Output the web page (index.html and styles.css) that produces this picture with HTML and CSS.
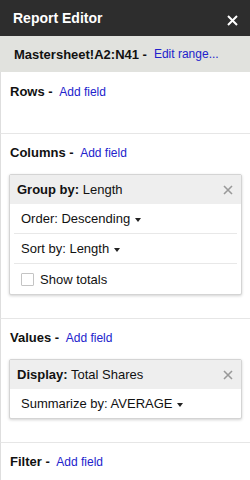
FILE: index.html
```html
<!DOCTYPE html>
<html lang="en">
<head>
    <meta charset="UTF-8">
    <title>Report Editor</title>
    <link rel="stylesheet" href="styles.css">
</head>
<body>
    <div class="panel">
        <div class="panel-header">
            <span class="panel-title">Report Editor</span>
            <svg class="panel-close" width="11" height="11" viewBox="0 0 11 11">
                <path d="M1 1L10 10M10 1L1 10" stroke="#fff" stroke-width="2"/>
            </svg>
        </div>
        <div class="range-bar">
            <span class="range-name">Mastersheet!A2:N41 -</span>
            <a class="link" href="#">Edit range...</a>
        </div>

        <div class="section section-first">
            <div class="section-head">Rows - <a class="link" href="#">Add field</a></div>
            <div class="fields-empty"></div>
        </div>

        <div class="section">
            <div class="section-head">Columns - <a class="link" href="#">Add field</a></div>
            <div class="card">
                <div class="card-head">
                    <span><b>Group by:</b> Length</span>
                    <svg class="card-close" width="10" height="10" viewBox="0 0 10 10">
                        <path d="M1 1L9 9M9 1L1 9" stroke="#999" stroke-width="1.6"/>
                    </svg>
                </div>
                <div class="card-row">Order: Descending <span class="caret"></span></div>
                <div class="card-row">Sort by: Length <span class="caret"></span></div>
                <div class="card-row card-row-check">
                    <span class="checkbox"></span>
                    <span>Show totals</span>
                </div>
            </div>
        </div>

        <div class="section">
            <div class="section-head">Values - <a class="link" href="#">Add field</a></div>
            <div class="card">
                <div class="card-head">
                    <span><b>Display:</b> Total Shares</span>
                    <svg class="card-close" width="10" height="10" viewBox="0 0 10 10">
                        <path d="M1 1L9 9M9 1L1 9" stroke="#999" stroke-width="1.6"/>
                    </svg>
                </div>
                <div class="card-row">Summarize by: AVERAGE <span class="caret"></span></div>
            </div>
        </div>

        <div class="section section-last">
            <div class="section-head">Filter - <a class="link" href="#">Add field</a></div>
        </div>
    </div>
</body>
</html>
```

FILE: styles.css
```css
body {
    margin: 0;
    font-family: "Liberation Sans", Arial, sans-serif;
    font-size: 13px;
    color: #222;
    background: #fff;
}
.panel {
    width: 250px;
    height: 480px;
    overflow: hidden;
}
.panel-header {
    height: 36px;
    background-color: #2d2d2d;
    display: flex;
    align-items: center;
    justify-content: space-between;
    padding: 0 12px 0 13px;
}
.panel-title {
    color: #fff;
    font-weight: bold;
    font-size: 14px;
}
.panel-close {
    margin-top: 4px;
}
.range-bar {
    height: 36px;
    background-color: #e1e2de;
    display: flex;
    align-items: center;
    padding-left: 14px;
    gap: 7px;
}
.range-name {
    font-weight: bold;
    font-size: 13px;
    color: #111;
}
.link {
    color: #2222cc;
    text-decoration: none;
    font-size: 12px;
    font-weight: normal;
}
.section {
    border-left: 1px solid #dedede;
    border-bottom: 1px solid #e6e6e6;
    padding: 11px 8px 23px 8px;
}
.section-first {
    padding-top: 12px;
    padding-bottom: 22px;
}
.section-last {
    border-bottom: none;
}
.section-head {
    font-weight: bold;
    line-height: 16px;
    padding-left: 1px;
    color: #111;
}
.section-head .link {
    margin-left: 3px;
}
.fields-empty {
    height: 11px;
}
.card {
    margin-top: 13px;
    border: 1px solid #d4d4d4;
    border-radius: 2px;
    box-shadow: 0 1px 3px rgba(0, 0, 0, 0.18);
    background: #fff;
}
.card-head {
    height: 29px;
    background-color: #eeeeee;
    display: flex;
    align-items: center;
    justify-content: space-between;
    padding: 0 8px 0 7px;
    color: #111;
}
.card-row {
    height: 29px;
    margin: 0 4px;
    padding-left: 7px;
    display: flex;
    align-items: center;
    border-bottom: 1px solid #e8e8e8;
    color: #111;
}
.card-row:last-child {
    border-bottom: none;
}
.card-row-check {
    height: 30px;
}
.caret {
    display: inline-block;
    width: 0;
    height: 0;
    border-left: 3.5px solid transparent;
    border-right: 3.5px solid transparent;
    border-top: 4px solid #222;
    margin-left: 5px;
    margin-top: 2px;
}
.checkbox {
    width: 11px;
    height: 11px;
    border: 1px solid #c4c4c4;
    border-radius: 1px;
    margin-right: 6px;
}
```
